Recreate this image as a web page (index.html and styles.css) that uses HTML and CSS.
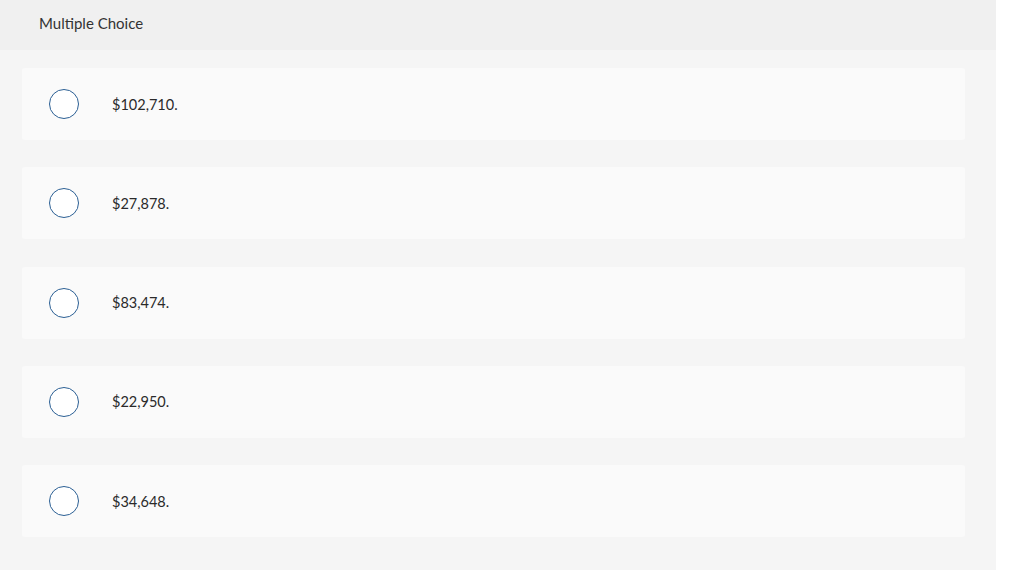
FILE: index.html
```html
<!DOCTYPE html>
<html lang="en">
  <head>
    <meta charset="UTF-8" />
    <meta name="viewport" content="width=device-width, initial-scale=1.0" />
    <title>Multiple Choice</title>
    <link rel="stylesheet" href="styles.css">
  </head>
  <body>
    <div class="question">
      <div class="question-header">Multiple Choice</div>
      <div class="choices">
        <label class="choice">
          <span class="radio"></span>
          <span class="choice-text">$102,710.</span>
        </label>
        <label class="choice">
          <span class="radio"></span>
          <span class="choice-text">$27,878.</span>
        </label>
        <label class="choice">
          <span class="radio"></span>
          <span class="choice-text">$83,474.</span>
        </label>
        <label class="choice">
          <span class="radio"></span>
          <span class="choice-text">$22,950.</span>
        </label>
        <label class="choice">
          <span class="radio"></span>
          <span class="choice-text">$34,648.</span>
        </label>
      </div>
    </div>
  </body>
</html>
```

FILE: styles.css
```css
body {
  margin: 0;
  font-family: Lato, "Open Sans", Arial, sans-serif;
  background-color: #fff;
  color: #333;
}
.question {
  width: 996px;
  min-height: 570px;
  background-color: #f5f5f5;
}
.question-header {
  height: 50px;
  padding-left: 39px;
  line-height: 46px;
  font-size: 15px;
  background-color: #f0f0f0;
  color: #333;
}
.choices {
  display: flex;
  flex-direction: column;
  gap: 27.25px;
  padding: 18px 31px 28px 22px;
}
.choice {
  display: flex;
  align-items: center;
  height: 72px;
  padding-left: 27px;
  background-color: #fafafa;
  border-radius: 3px;
  cursor: pointer;
}
.radio {
  width: 28px;
  height: 28px;
  border: 1.5px solid #2b5f94;
  border-radius: 50%;
  background-color: #fff;
}
.choice-text {
  margin-left: 33px;
  font-size: 14.5px;
  color: #2a2a2a;
}
```
